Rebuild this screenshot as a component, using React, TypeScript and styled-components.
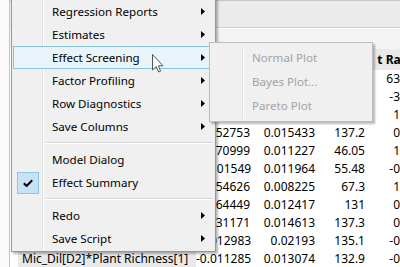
import React from "react";
import styled, { createGlobalStyle, css } from "styled-components";

const FONT = `"Noto Sans", "Open Sans", "DejaVu Sans", sans-serif`;

const Global = createGlobalStyle`
  html, body { margin: 0; padding: 0; background: #ffffff; }
  body { width: 400px; height: 267px; overflow: hidden; }
`;

const Page = styled.div`
  position: relative;
  width: 400px;
  height: 267px;
  overflow: hidden;
  display: flex;
  background: #ffffff;
  font-family: ${FONT};
  font-size: 12px;
  color: #000;
`;

const Gutter = styled.div`
  flex: none;
  width: 9px;
  background: #fafafa;
  border-right: 1px solid #c4c4c4;
`;

const Report = styled.div`
  flex: 1;
  display: flex;
  flex-direction: column;
  min-width: 0;
`;

const OutlineBar = styled.div`
  flex: none;
  height: 26px;
  background: #ebebeb;
  border-top: 1px solid #c6c6c6;
  border-bottom: 1px solid #cfcfcf;
`;

const SubBar = styled.div`
  flex: none;
  height: 20px;
  background: #f3f3f3;
  border-top: 1px solid #ffffff;
`;

const grid = css`
  display: grid;
  grid-template-columns: 8px 178px 56px 65px 50px 52px;
`;

const HeaderRow = styled.div`
  ${grid};
  height: 21px;
  background: #e9e9e9;
  font-weight: bold;
  align-items: center;
`;

const Row = styled.div`
  ${grid};
  height: 18px;
  align-items: center;
`;

const Indent = styled.div`
  height: 100%;
  background: #ffffff;
`;

const LabelCell = styled.div`
  height: 100%;
  display: flex;
  align-items: center;
  padding-left: 4px;
  background: #e9e9e9;
  white-space: nowrap;
  overflow: hidden;
`;

const NumCell = styled.div`
  text-align: right;
  padding-right: 2px;
  white-space: nowrap;
`;

/* ---------- popup menus ---------- */

const MenuPanel = styled.div<{ $left: number; $top: number; $width: number; $sub?: boolean }>`
  position: absolute;
  left: ${(p) => p.$left}px;
  top: ${(p) => p.$top}px;
  width: ${(p) => p.$width}px;
  box-sizing: border-box;
  background: #f0f0f0;
  border: 1px solid ${(p) => (p.$sub ? "#bdbdbd" : "#979797")};
  padding: ${(p) => (p.$sub ? "3px 2px 3px 2px" : "2px 2px 1px 1px")};
  box-shadow: 2px 2px 2px rgba(0, 0, 0, 0.28);
  display: flex;
  flex-direction: column;
  font-family: ${FONT};
  font-size: 11.6px;
`;

const Item = styled.div<{ $h: number; $hot?: boolean; $disabled?: boolean }>`
  height: ${(p) => p.$h}px;
  display: flex;
  align-items: center;
  color: ${(p) => (p.$disabled ? "#a3a3a3" : "#000")};
  background: ${(p) => (p.$hot ? "#e8f4fa" : "transparent")};
  box-shadow: ${(p) => (p.$hot ? "inset 0 0 0 1px #86c5df" : "none")};
`;

const IconCell = styled.div<{ $w: number; $hide?: boolean }>`
  flex: none;
  width: ${(p) => p.$w}px;
  height: 100%;
  display: flex;
  align-items: center;
  justify-content: center;
  border-right: 1px solid ${(p) => (p.$hide ? "transparent" : "#e0e0e0")};
  box-shadow: ${(p) => (p.$hide ? "none" : "1px 0 0 #ffffff")};
`;

const CheckBox = styled.div`
  width: 20px;
  height: 20px;
  background: #c6e2f4;
  border: 1px solid #8ec3e2;
  display: flex;
  align-items: center;
  justify-content: center;
`;

const Label = styled.span`
  margin-left: 9px;
  white-space: nowrap;
  line-height: 16px;
`;

const Arrow = styled.svg`
  margin-left: auto;
  margin-right: 8px;
  flex: none;
`;

const Separator = styled.div`
  height: 10px;
  display: flex;
  align-items: center;
`;

const SepLine = styled.div`
  flex: 1;
  margin-left: 3px;
  height: 1px;
  background: #d7d7d7;
  border-bottom: 1px solid #ffffff;
`;

const SepIcon = styled.div`
  flex: none;
  width: 29px;
  height: 100%;
  border-right: 1px solid #e0e0e0;
  box-shadow: 1px 0 0 #ffffff;
`;

const Cursor = styled.svg`
  position: absolute;
  left: 152px;
  top: 54px;
`;

type MenuEntry =
  | { kind: "item"; label: string; sub?: boolean; hot?: boolean; checked?: boolean }
  | { kind: "sep" };

const mainMenu: MenuEntry[] = [
  { kind: "item", label: "Regression Reports", sub: true },
  { kind: "item", label: "Estimates", sub: true },
  { kind: "item", label: "Effect Screening", sub: true, hot: true },
  { kind: "item", label: "Factor Profiling", sub: true },
  { kind: "item", label: "Row Diagnostics", sub: true },
  { kind: "item", label: "Save Columns", sub: true },
  { kind: "sep" },
  { kind: "item", label: "Model Dialog" },
  { kind: "item", label: "Effect Summary", checked: true },
  { kind: "sep" },
  { kind: "item", label: "Redo", sub: true },
  { kind: "item", label: "Save Script", sub: true },
];

const subMenu = ["Normal Plot", "Bayes Plot...", "Pareto Plot"];

/* Only the parts of the table that the open menus leave uncovered carry text. */
const rows: { term: string; est: string; se: string; df: string; t: string }[] = [
  { term: "", est: "", se: "", df: "", t: "63.25" },
  { term: "", est: "", se: "", df: "", t: "-3.33" },
  { term: "", est: "", se: "", df: "", t: "1.66" },
  { term: "", est: "0.052753", se: "0.015433", df: "137.2", t: "0.42" },
  { term: "", est: "0.070999", se: "0.011227", df: "46.05", t: "1.34" },
  { term: "", est: "-0.101549", se: "0.011964", df: "55.48", t: "-0.13" },
  { term: "", est: "0.054626", se: "0.008225", df: "67.3", t: "1.15" },
  { term: "", est: "0.064449", se: "0.012417", df: "131", t: "0.52" },
  { term: "", est: "0.031171", se: "0.014613", df: "137.3", t: "0.21" },
  { term: "", est: "-0.012983", se: "0.02193", df: "135.1", t: "-0.59" },
  { term: "Mic_Dil[D2]*Plant Richness[1]", est: "-0.011285", se: "0.013074", df: "132.9", t: "-0.86" },
];

const SubArrow = () => (
  <Arrow width="4" height="7" viewBox="0 0 4 7">
    <path d="M0 0 L4 3.5 L0 7 Z" fill="#000" />
  </Arrow>
);

export default function App() {
  return (
    <>
      <Global />
      <Page>
        <Gutter />
        <Report>
          <OutlineBar />
          <SubBar />
          <HeaderRow>
            <Indent />
            <LabelCell />
            <NumCell />
            <NumCell />
            <NumCell />
            <NumCell>t Ratio</NumCell>
          </HeaderRow>
          {rows.map((r, i) => (
            <Row key={i}>
              <Indent />
              <LabelCell>{r.term}</LabelCell>
              <NumCell>{r.est}</NumCell>
              <NumCell>{r.se}</NumCell>
              <NumCell>{r.df}</NumCell>
              <NumCell>{r.t}</NumCell>
            </Row>
          ))}
        </Report>

        <MenuPanel $left={11} $top={-3} $width={205}>
          {mainMenu.map((m, i) =>
            m.kind === "sep" ? (
              <Separator key={i}>
                <SepIcon />
                <SepLine />
              </Separator>
            ) : (
              <Item key={i} $h={23} $hot={m.hot}>
                <IconCell $w={29} $hide={m.hot}>
                  {m.checked && (
                    <CheckBox>
                      <svg width="10" height="8" viewBox="0 0 10 8">
                        <path d="M0.8 4.2 L3.6 7 L9.2 1.2" fill="none" stroke="#000" strokeWidth="2" />
                      </svg>
                    </CheckBox>
                  )}
                </IconCell>
                <Label>{m.label}</Label>
                {m.sub && <SubArrow />}
              </Item>
            )
          )}
        </MenuPanel>

        <MenuPanel $left={209} $top={42} $width={164} $sub>
          {subMenu.map((s) => (
            <Item key={s} $h={24} $disabled>
              <IconCell $w={30} />
              <Label>{s}</Label>
            </Item>
          ))}
        </MenuPanel>

        <Cursor width="12" height="19" viewBox="0 0 12 19">
          <path
            d="M0.5 0.5 L0.5 16 L4.2 12.6 L6.6 18 L8.6 17.1 L6.3 11.8 L11 11.8 Z"
            fill="#fff"
            stroke="#555"
            strokeWidth="1"
            strokeLinejoin="round"
          />
        </Cursor>
      </Page>
    </>
  );
}
